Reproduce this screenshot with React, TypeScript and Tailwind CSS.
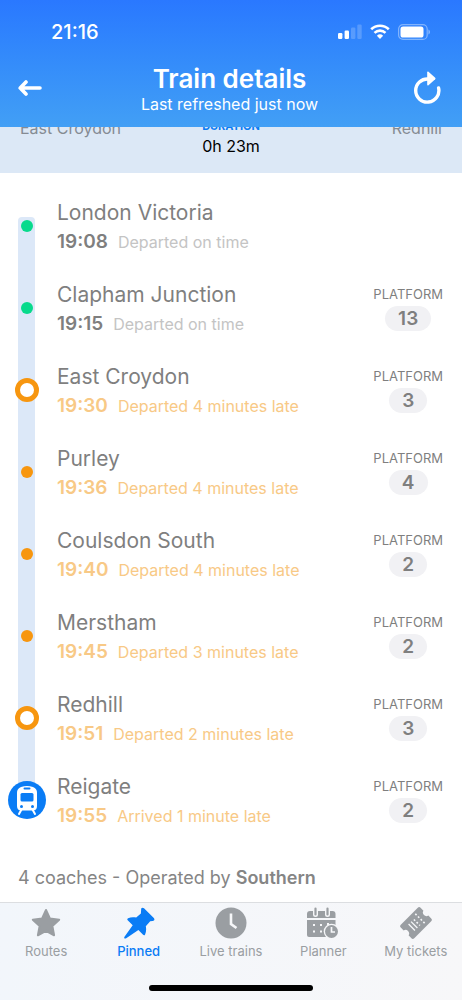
import React from "react";

type Stop = {
  name: string;
  time: string;
  status: string;
  late: boolean;
  marker: "green" | "orange" | "ring" | "train";
  platform?: string;
};

const stops: Stop[] = [
  { name: "London Victoria", time: "19:08", status: "Departed on time", late: false, marker: "green" },
  { name: "Clapham Junction", time: "19:15", status: "Departed on time", late: false, marker: "green", platform: "13" },
  { name: "East Croydon", time: "19:30", status: "Departed 4 minutes late", late: true, marker: "ring", platform: "3" },
  { name: "Purley", time: "19:36", status: "Departed 4 minutes late", late: true, marker: "orange", platform: "4" },
  { name: "Coulsdon South", time: "19:40", status: "Departed 4 minutes late", late: true, marker: "orange", platform: "2" },
  { name: "Merstham", time: "19:45", status: "Departed 3 minutes late", late: true, marker: "orange", platform: "2" },
  { name: "Redhill", time: "19:51", status: "Departed 2 minutes late", late: true, marker: "ring", platform: "3" },
  { name: "Reigate", time: "19:55", status: "Arrived 1 minute late", late: true, marker: "train", platform: "2" },
];

function SignalIcon() {
  return (
    <svg width="24" height="16" viewBox="0 0 24 16" fill="#fff" aria-hidden="true">
      <rect x="0" y="9" width="4.4" height="6" rx="1.2" />
      <rect x="6.6" y="6.5" width="4.4" height="8.5" rx="1.2" />
      <rect x="13" y="3.5" width="4.4" height="11.5" rx="1.2" opacity=".2" />
      <rect x="19.3" y="0.5" width="4.4" height="14.5" rx="1.2" opacity=".2" />
    </svg>
  );
}

function WifiIcon() {
  return (
    <svg width="20" height="16" viewBox="0 0 20 16" fill="none" stroke="#fff" strokeWidth="2.6" aria-hidden="true">
      <path d="M1.2 5.3a12.6 12.6 0 0 1 17.6 0" />
      <path d="M4.5 8.9a7.9 7.9 0 0 1 11 0" />
      <path d="M6.9 11.8a4.5 4.5 0 0 1 6.2 0L10 15z" fill="#fff" stroke="none" />
    </svg>
  );
}

function BatteryIcon() {
  return (
    <svg width="33" height="16" viewBox="0 0 33 16" aria-hidden="true">
      <rect x="0.6" y="0.6" width="28.6" height="14.8" rx="4.5" fill="none" stroke="#fff" strokeOpacity=".4" strokeWidth="1.2" />
      <rect x="2.5" y="2.5" width="23" height="11" rx="2.6" fill="#fff" />
      <path d="M30.5 5.5c1.8.7 1.8 4.3 0 5z" fill="#fff" opacity=".5" />
    </svg>
  );
}

function BackIcon() {
  return (
    <svg width="24" height="18" viewBox="0 0 24 18" fill="none" stroke="#fff" strokeWidth="3.6" strokeLinecap="round" strokeLinejoin="round" aria-hidden="true">
      <path d="M2.2 9h19.8M8 3L2.2 9 8 15" />
    </svg>
  );
}

function RefreshIcon() {
  return (
    <svg width="28" height="34" viewBox="0 0 28 34" aria-hidden="true">
      <path d="M15.5 8A11.6 11.6 0 1 0 25.6 17" fill="none" stroke="#fff" strokeWidth="3.4" strokeLinecap="round" />
      <path d="M14.2 1.2v12.6c0 .8.7 1 1.3.5l6.700-6.100c.5-.5.5-1 0-1.500L15.500.700c-.6-.5-1.300-.3-1.300.5z" fill="#fff" />
    </svg>
  );
}

function TrainIcon() {
  return (
    <svg width="38" height="38" viewBox="0 0 38 38" aria-hidden="true">
      <circle cx="19" cy="19" r="19" fill="#0a7cf5" />
      <path d="M13.500 28.500l-2.500 4.500M24.500 28.500l2.500 4.500" stroke="#fff" strokeWidth="2" strokeLinecap="round" />
      <path d="M13 6Q19 4 25 6Q29 7.500 29 11.500V25Q29 29.500 24.500 29.500H13.500Q9 29.500 9 25V11.500Q9 7.500 13 6Z" fill="#fff" />
      <rect x="15.500" y="6.500" width="7" height="2" rx="1" fill="#0a7cf5" />
      <rect x="12.500" y="12" width="13" height="8.500" rx="1.500" fill="#0a7cf5" />
      <circle cx="13.500" cy="25.500" r="1.500" fill="#0a7cf5" />
      <circle cx="24.500" cy="25.500" r="1.500" fill="#0a7cf5" />
    </svg>
  );
}

function StarIcon() {
  return (
    <svg width="32" height="32" viewBox="0 0 32 32" fill="currentColor" stroke="currentColor" strokeWidth="2" strokeLinejoin="round" aria-hidden="true">
      <path d="M16 3l3.900 8.500 9.300 1.200-6.800 6.400 1.700 9.200-8.100-4.500-8.100 4.500 1.700-9.200-6.800-6.400 9.300-1.200z" />
    </svg>
  );
}

function PinIcon() {
  return (
    <svg width="32" height="32" viewBox="0 0 32 32" fill="currentColor" aria-hidden="true">
      <path d="M18.200 1.600c.7-1.200 1.900-1.200 2.800-.3l9.800 9.800c1.200 1.300.6 2.700-1.200 2.900l-2.400.3-4.400 4.900c.6 3 .4 5.700-.7 8.200-.4 1-1.300 1.100-2 .4l-4.700-4.700L3.200 31.200c-1.400 1-2.600-.1-1.700-1.500l8.200-11.500-5-5c-.7-.7-.5-1.600.4-2 2.500-1.100 5.200-1.200 8.100-.6l4.700-4.200z" />
    </svg>
  );
}

function ClockIcon() {
  return (
    <svg width="32" height="32" viewBox="0 0 32 32" aria-hidden="true">
      <circle cx="16" cy="16" r="15.500" fill="currentColor" />
      <path d="M16 6.500v10.500l5.500 4" fill="none" stroke="#f6f7f9" strokeWidth="2.600" />
    </svg>
  );
}

function PlannerIcon() {
  return (
    <svg width="32" height="32" viewBox="0 0 32 32" aria-hidden="true">
      <path d="M3 4H25.500Q28.500 4 28.500 7V11H0V7Q0 4 3 4Z" fill="currentColor" />
      <path d="M0 13H28.500V28Q28.500 30 26.500 30H2Q0 30 0 28Z" fill="currentColor" />
      <path d="M8.500 1.500v6M20.500 1.500v6" stroke="#f6f7f9" strokeWidth="5" strokeLinecap="round" />
      <path d="M8.500 1.500v6M20.500 1.500v6" stroke="currentColor" strokeWidth="2.200" strokeLinecap="round" />
      <g fill="#f6f7f9">
        <rect x="6" y="17" width="2" height="2" />
        <rect x="13" y="17" width="2" height="2" />
        <rect x="20" y="16" width="2" height="2" />
        <rect x="6" y="23.500" width="2" height="2" />
        <rect x="13" y="23.500" width="2" height="2" />
      </g>
      <circle cx="24.500" cy="24.500" r="7.800" fill="#f6f7f9" />
      <circle cx="24.500" cy="24.500" r="6.500" fill="currentColor" />
      <path d="M24.500 20v5h3.500" fill="none" stroke="#f6f7f9" strokeWidth="1.700" />
    </svg>
  );
}

function TicketIcon() {
  return (
    <svg width="32" height="32" viewBox="0 0 32 32" aria-hidden="true">
      <g transform="rotate(-45 16 16)">
        <path d="M4 6.500H28Q30 6.500 30 8.500V12.500A3.600 3.600 0 0 0 30 19.500V23.500Q30 25.500 28 25.500H4Q2 25.500 2 23.500V19.500A3.600 3.600 0 0 0 2 12.500V8.500Q2 6.500 4 6.500Z" fill="currentColor" />
        <path d="M10 11.500v9M13.500 11.500v9" stroke="#f6f7f9" strokeWidth="1.300" />
        <path d="M17 12v8.500M22 9v14" stroke="#f6f7f9" strokeWidth="1.600" strokeDasharray="1.800 2" />
      </g>
    </svg>
  );
}

function Marker({ kind }: { kind: Stop["marker"] }) {
  if (kind === "train") return <TrainIcon />;
  if (kind === "ring") return <span className="size-6 rounded-full border-5 border-[#f7960f] bg-white" />;
  if (kind === "green") return <span className="size-3 rounded-full bg-[#08da8c]" />;
  return <span className="size-3 rounded-full bg-[#f7960f]" />;
}

function StopRow({ stop, first, last }: { stop: Stop; first: boolean; last: boolean }) {
  const rail = first ? "h-[50px] self-end rounded-t-sm" : last ? "h-1/2 self-start" : "h-full";
  return (
    <li className="flex h-[82px] items-stretch pr-[19px]">
      <div className="grid w-[53px] shrink-0 place-items-center">
        <div className={`col-start-1 row-start-1 w-[17px] bg-[#dce8f8] ${rail}`} />
        <div className="col-start-1 row-start-1 grid place-items-center">
          <Marker kind={stop.marker} />
        </div>
      </div>
      <div className="min-w-0 flex-1 pt-[14px] pl-1">
        <h2 className="text-[21px] leading-7 text-[#7f7f7f]">{stop.name}</h2>
        <p className="flex items-baseline gap-[10px] leading-[30px] whitespace-nowrap">
          <time className={`text-[19px] font-semibold ${stop.late ? "text-[#f8c986]" : "text-[#7f7f7f]"}`}>{stop.time}</time>
          <span className={`text-[16px] ${stop.late ? "text-[#f8c986]" : "text-[#c4c4c4]"}`}>{stop.status}</span>
        </p>
      </div>
      {stop.platform && (
        <div className="flex flex-col items-center gap-[2px] pt-[17px] text-[#7f7f7f]">
          <span className="text-[13px] leading-5">PLATFORM</span>
          <span className="rounded-full bg-[#f1f1f4] px-[13px] text-[19px] leading-[25px] font-semibold">{stop.platform}</span>
        </div>
      )}
    </li>
  );
}

const tabs = [
  { label: "Routes", icon: <StarIcon />, active: false },
  { label: "Pinned", icon: <PinIcon />, active: true },
  { label: "Live trains", icon: <ClockIcon />, active: false },
  { label: "Planner", icon: <PlannerIcon />, active: false },
  { label: "My tickets", icon: <TicketIcon />, active: false },
];

export default function App() {
  return (
    <div className="flex min-h-screen flex-col bg-white font-['Inter',sans-serif]">
      <header className="relative z-10 bg-linear-to-b from-[#2a78ff] to-[#429ff5] pb-[14px] text-white">
        <div className="flex items-center justify-between pt-[18px] pr-[31px] pl-[51px]">
          <span className="text-[20px] leading-7 font-medium">21:16</span>
          <div className="flex items-center gap-[8px]">
            <SignalIcon />
            <WifiIcon />
            <BatteryIcon />
          </div>
        </div>
        <div className="flex items-center justify-between pt-[17px] pr-[21px] pl-[18px]">
          <button type="button" aria-label="Back" className="flex w-7 justify-start">
            <BackIcon />
          </button>
          <div className="text-center">
            <h1 className="text-[26px] leading-8 font-semibold">Train details</h1>
            <p className="text-[16px] leading-[18px]">Last refreshed just now</p>
          </div>
          <button type="button" aria-label="Refresh" className="flex w-7 justify-end">
            <RefreshIcon />
          </button>
        </div>
      </header>

      <main className="flex flex-1 flex-col">
        <section className="-mt-[9px] flex items-start justify-between bg-[#dce8f6] px-5 pb-[15px] text-[16px] text-[#858b93]">
          <span className="flex-1 leading-5">East Croydon</span>
          <div className="text-center text-black">
            <p className="text-[11px] leading-4 font-bold text-[#0a7cf5]">DURATION</p>
            <p className="leading-6">0h 23m</p>
          </div>
          <span className="flex-1 text-right leading-5">Redhill</span>
        </section>

        <ol className="pt-3">
          {stops.map((stop, i) => (
            <StopRow key={stop.name} stop={stop} first={i === 0} last={i === stops.length - 1} />
          ))}
        </ol>

        <p className="px-[18px] pt-[23px] pb-[10px] text-[18px] leading-7 text-[#858585]">
          4 coaches - Operated by <strong className="font-semibold">Southern</strong>
        </p>
      </main>

      <footer className="border-t border-[#dcdee1] bg-linear-to-r from-[#f2f6fb] to-[#f7f7f9]">
        <nav className="grid grid-cols-5 pt-1">
          {tabs.map((tab) => (
            <a
              key={tab.label}
              href="#"
              className={`flex flex-col items-center gap-[2px] text-[13px] leading-5 whitespace-nowrap ${tab.active ? "text-[#0a7cf5]" : "text-[#9a9ea2]"}`}
            >
              <span className="flex h-8 items-center">{tab.icon}</span>
              <span className={tab.active ? "font-medium" : ""}>{tab.label}</span>
            </a>
          ))}
        </nav>
        <div className="mx-auto mt-6 mb-[9px] h-[6px] w-[164px] rounded-full bg-black" />
      </footer>
    </div>
  );
}
